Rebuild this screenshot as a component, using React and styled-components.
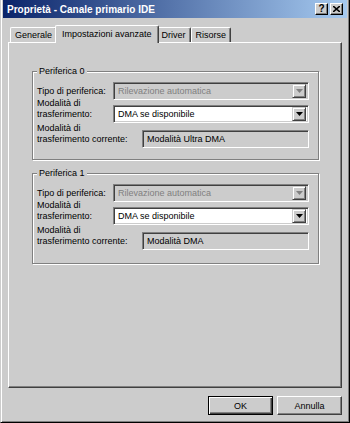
import React from "react";
import styled, { createGlobalStyle } from "styled-components";

const FACE = "#cccccc";
const SHADOW = "#808080";
const DARK = "#404040";

const GlobalStyle = createGlobalStyle`
  html, body { margin: 0; padding: 0; background: ${FACE}; }
  body { font-family: "Liberation Sans", Arial, sans-serif; font-size: 9px; color: #000; }
`;

const Window = styled.div`
  width: 350px;
  height: 423px;
  box-sizing: border-box;
  background: ${FACE};
  border-left: 1px solid ${FACE};
  border-right: 1px solid #000;
  border-bottom: 1px solid #000;
  box-shadow: inset 1px 0 0 #fff, inset -1px -1px 0 ${SHADOW};
  display: flex;
  flex-direction: column;
  padding: 0 3px 3px 3px;
`;

const TitleBar = styled.div`
  height: 18px;
  margin: 0 -1px 0 -1px;
  background: linear-gradient(to right, #0a246a, #a6caf0);
  display: flex;
  align-items: center;
  padding: 0 4px 0 4px;
  flex-shrink: 0;
`;

const TitleText = styled.div`
  flex: 1;
  color: #fff;
  font-weight: bold;
  font-size: 10px;
  white-space: nowrap;
`;

const CaptionButtons = styled.div`
  display: flex;
  gap: 2px;
`;

const CaptionButton = styled.div`
  width: 13px;
  height: 12px;
  box-sizing: border-box;
  background: ${FACE};
  border: 1px solid;
  border-color: #fff #000 #000 #fff;
  box-shadow: inset -1px -1px 0 ${SHADOW};
  display: flex;
  align-items: center;
  justify-content: center;
  font-weight: bold;
  font-size: 10px;
  line-height: 1;
`;

const Body = styled.div`
  flex: 1;
  display: flex;
  flex-direction: column;
  padding: 6px 4px 0 4px;
`;

const TabStrip = styled.div`
  display: flex;
  align-items: flex-end;
  padding-left: 2px;
  height: 18px;
  position: relative;
  z-index: 1;
`;

const Tab = styled.div`
  box-sizing: border-box;
  height: ${(p) => (p.$active ? 18 : 15)}px;
  margin: 0 ${(p) => (p.$active ? -2 : 0)}px ${(p) => (p.$active ? -1 : 0)}px;
  padding: 0 ${(p) => (p.$active ? 6 : 4)}px;
  ${(p) => p.$active && "padding-bottom: 1px;"}
  background: ${FACE};
  border-top: 1px solid #fff;
  border-left: 1px solid #fff;
  border-right: 1px solid ${DARK};
  box-shadow: inset -1px 0 0 ${SHADOW};
  border-radius: 2px 2px 0 0;
  display: flex;
  align-items: center;
  white-space: nowrap;
  z-index: ${(p) => (p.$active ? 2 : 1)};
`;

const Panel = styled.div`
  height: 346px;
  box-sizing: border-box;
  border-top: 1px solid #fff;
  border-left: 1px solid #fff;
  border-right: 1px solid ${DARK};
  border-bottom: 1px solid ${DARK};
  box-shadow: inset -1px -1px 0 ${SHADOW};
  padding: 23px 22px 0 23px;
  display: flex;
  flex-direction: column;
  gap: 8px;
`;

const Group = styled.fieldset`
  margin: 0;
  padding: 3px 9px ${(p) => p.$padBottom}px 4px;
  border: 1px solid ${SHADOW};
  box-shadow: inset 1px 1px 0 #fff, 1px 1px 0 #fff;
  display: flex;
  flex-direction: column;
`;

const Legend = styled.legend`
  padding: 0 2px;
  margin-left: 0;
  line-height: 11px;
  background: ${FACE};
`;

const Row = styled.div`
  display: grid;
  grid-template-columns: ${(p) => p.$labelW}px 1fr;
  margin-top: ${(p) => p.$gap}px;
`;

const Label = styled.div`
  height: 18px;
  display: flex;
  flex-direction: column;
  justify-content: flex-end;
  padding-bottom: 3px;
  box-sizing: border-box;
  line-height: 11px;
  white-space: nowrap;
`;

const Sunken = styled.div`
  height: 18px;
  box-sizing: border-box;
  border: 1px solid;
  border-color: ${SHADOW} #fff #fff ${SHADOW};
  box-shadow: inset 1px 1px 0 ${DARK}, inset -1px -1px 0 ${FACE};
  background: ${(p) => (p.$white ? "#fff" : FACE)};
  color: ${(p) => (p.$disabled ? SHADOW : "#000")};
  display: flex;
  align-items: center;
  padding: 2px 2px 2px 4px;
  white-space: nowrap;
`;

const FieldText = styled.div`
  flex: 1;
`;

const DropButton = styled.div`
  width: 14px;
  height: 14px;
  box-sizing: border-box;
  background: ${FACE};
  border: 1px solid;
  border-color: ${FACE} ${DARK} ${DARK} ${FACE};
  box-shadow: inset 1px 1px 0 #fff, inset -1px -1px 0 ${SHADOW};
  display: flex;
  align-items: center;
  justify-content: center;
`;

const Arrow = ({ disabled }) => (
  <svg width="7" height="4" viewBox="0 0 7 4">
    <path d="M0 0H7L3.5 4Z" fill={disabled ? SHADOW : "#000"} />
  </svg>
);

const Combo = ({ value, disabled }) => (
  <Sunken $white={!disabled} $disabled={disabled}>
    <FieldText>{value}</FieldText>
    <DropButton>
      <Arrow disabled={disabled} />
    </DropButton>
  </Sunken>
);

const Footer = styled.div`
  display: flex;
  justify-content: flex-end;
  gap: 4px;
  padding-top: 8px;
`;

const Button = styled.div`
  width: 65px;
  height: 19px;
  box-sizing: border-box;
  background: ${FACE};
  border: 1px solid;
  border-color: ${(p) => (p.$default ? "#000" : "#fff #404040 #404040 #fff")};
  box-shadow: ${(p) =>
    p.$default
      ? `inset 1px 1px 0 #fff, inset -1px -1px 0 ${DARK}, inset -2px -2px 0 ${SHADOW}`
      : `inset -1px -1px 0 ${SHADOW}`};
  display: flex;
  align-items: center;
  justify-content: center;
`;

const Device = ({ name, mode, current, padBottom }) => (
  <Group $padBottom={padBottom}>
    <Legend>{name}</Legend>
    <Row $labelW={76} $gap={2}>
      <Label>Tipo di periferica:</Label>
      <Combo value="Rilevazione automatica" disabled />
    </Row>
    <Row $labelW={76} $gap={5}>
      <Label>
        <span>Modalità di</span>
        <span>trasferimento:</span>
      </Label>
      <Combo value={mode} />
    </Row>
    <Row $labelW={105} $gap={7}>
      <Label>
        <span>Modalità di</span>
        <span>trasferimento corrente:</span>
      </Label>
      <Sunken>{current}</Sunken>
    </Row>
  </Group>
);

export default function App() {
  return (
    <>
      <GlobalStyle />
      <Window>
        <TitleBar>
          <TitleText>Proprietà - Canale primario IDE</TitleText>
          <CaptionButtons>
            <CaptionButton>?</CaptionButton>
            <CaptionButton>
              <svg width="7" height="6" viewBox="0 0 7 6">
                <path d="M0 0L7 6M7 0L0 6" stroke="#000" strokeWidth="1.6" />
              </svg>
            </CaptionButton>
          </CaptionButtons>
        </TitleBar>
        <Body>
          <TabStrip>
            <Tab>Generale</Tab>
            <Tab $active>Impostazioni avanzate</Tab>
            <Tab>Driver</Tab>
            <Tab>Risorse</Tab>
          </TabStrip>
          <Panel>
            <Device name="Periferica 0" mode="DMA se disponibile" current="Modalità Ultra DMA" padBottom={11} />
            <Device name="Periferica 1" mode="DMA se disponibile" current="Modalità DMA" padBottom={13} />
          </Panel>
          <Footer>
            <Button $default>OK</Button>
            <Button>Annulla</Button>
          </Footer>
        </Body>
      </Window>
    </>
  );
}
